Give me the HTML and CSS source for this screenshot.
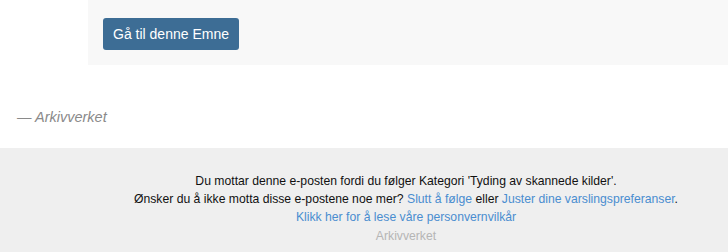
FILE: index.html
```html
<!DOCTYPE html>
<html>
<head>
<meta charset="utf-8">
<link rel="stylesheet" href="styles.css">
</head>
<body>
<div class="main">
  <div class="post">
    <a class="btn" href="#">Gå til denne Emne</a>
  </div>
  <div class="sig">— Arkivverket</div>
</div>
<div class="footer">
  <div class="footer-inner">
    <div class="line">Du mottar denne e-posten fordi du følger Kategori 'Tyding av skannede kilder'.</div>
    <div class="line">Ønsker du å ikke motta disse e-postene noe mer? <a href="#">Slutt å følge</a> eller <a href="#">Juster dine varslingspreferanser</a>.</div>
    <div class="line"><a href="#">Klikk her for å lese våre personvernvilkår</a></div>
    <div class="line muted">Arkivverket</div>
  </div>
</div>
</body>
</html>
```

FILE: styles.css
```css
html, body {
  margin: 0;
  padding: 0;
  background: #ffffff;
  font-family: "Liberation Sans", Arial, sans-serif;
}
.main {
  height: 148px;
}
.post {
  margin-left: 88px;
  background: #f8f8f8;
  height: 65px;
  padding: 18px 0 0 15px;
  box-sizing: border-box;
}
.btn {
  display: inline-block;
  background: #3d6d95;
  color: #ffffff;
  text-decoration: none;
  font-size: 14px;
  line-height: 32px;
  height: 32px;
  padding: 0 10px;
  border-radius: 3px;
}
.sig {
  margin: 43px 0 0 17px;
  font-size: 14.5px;
  font-style: italic;
  color: #8a8a8a;
  line-height: 18px;
}
.footer {
  background: #efefef;
  height: 104px;
  padding-top: 24px;
  box-sizing: border-box;
}
.footer-inner {
  margin-left: 84px;
  text-align: center;
  font-size: 12.2px;
  line-height: 18px;
  color: #111111;
}
.footer a {
  color: #4a8dd0;
  text-decoration: none;
}
.muted {
  color: #b5b5b5;
  margin-top: 1px;
}
```
